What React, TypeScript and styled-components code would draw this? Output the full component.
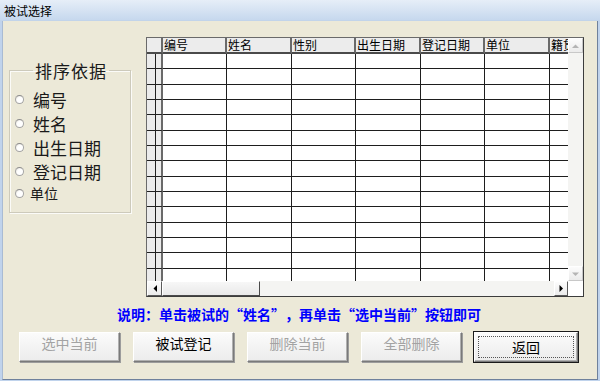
import React from 'react'
import styled, { createGlobalStyle } from 'styled-components'

const GlobalStyle = createGlobalStyle`
  html, body {
    margin: 0;
    padding: 0;
    background: #bcd0ea;
  }
  * {
    box-sizing: border-box;
  }
`

const CJK = `"Noto Sans CJK SC", "Noto Sans", sans-serif`

const columns = ['编号', '姓名', '性别', '出生日期', '登记日期', '单位', '籍贯']
const columnWidths = [64, 65, 64, 65, 64, 65, 64]
const ROWS = 15

const sortOptions = [
  { label: '编号', size: 17, height: 24, gap: 9 },
  { label: '姓名', size: 17, height: 24, gap: 9 },
  { label: '出生日期', size: 17, height: 24, gap: 9 },
  { label: '登记日期', size: 17, height: 24, gap: 9 },
  { label: '单位', size: 14, height: 20, gap: 6 },
]

const buttons = [
  { text: '选中当前', disabled: true },
  { text: '被试登记' },
  { text: '删除当前', disabled: true },
  { text: '全部删除', disabled: true },
  { text: '返回', isDefault: true },
]

type Dir = 'up' | 'down' | 'left' | 'right'

function Triangle ({ dir, color }: { dir: Dir, color: string }) {
  const pts = {
    up: '0,4 7,4 3.5,0.5',
    down: '0,0.5 7,0.5 3.5,4',
    left: '4,0 4,7 0.5,3.5',
    right: '0.5,0 0.5,7 4,3.5',
  }[dir]
  const vertical = dir === 'up' || dir === 'down'
  return (
    <svg width={vertical ? 7 : 4} height={vertical ? 4 : 7} viewBox={vertical ? '0 0 7 4' : '0 0 4 7'}>
      <polygon points={pts} fill={color} />
    </svg>
  )
}

export default function App () {
  return (
    <>
      <GlobalStyle />
      <Window>
        <TitleBar>被试选择</TitleBar>
        <Client>
          <TopRow>
            <SortGroup>
              <SortLegend>排序依据</SortLegend>
              {sortOptions.map(o => (
                <RadioRow key={o.label} $size={o.size} $height={o.height} $gap={o.gap}>
                  <RadioDot />
                  <span>{o.label}</span>
                </RadioRow>
              ))}
            </SortGroup>

            <GridFrame>
              <GridTable>
                <HeaderCell $span={2} />
                {columns.map(c => <HeaderCell key={c}>{c}</HeaderCell>)}
                {Array.from({ length: ROWS }).map((_, r) => (
                  <React.Fragment key={r}>
                    <SelectorCell />
                    <SelectorCell $thick />
                    {columnWidths.map((_, c) => <DataCell key={c} />)}
                  </React.Fragment>
                ))}
              </GridTable>

              <VScroll>
                <ArrowButton><Triangle dir="up" color="#b4b4b4" /></ArrowButton>
                <Track />
                <ArrowButton><Triangle dir="down" color="#b4b4b4" /></ArrowButton>
              </VScroll>

              <HScroll>
                <ArrowButton $dark><Triangle dir="left" color="#000" /></ArrowButton>
                <Thumb />
                <Track />
                <ArrowButton $dark $width={14}><Triangle dir="right" color="#000" /></ArrowButton>
              </HScroll>

              <Corner />
            </GridFrame>
          </TopRow>

          <Hint>
            说明：单击被试的<Quote $open>“</Quote>姓名<Quote>”</Quote>，再单击<Quote $open>“</Quote>选中当前<Quote>”</Quote>按钮即可
          </Hint>

          <ButtonRow>
            {buttons.map(b => (
              <WinButton key={b.text} disabled={b.disabled} $default={b.isDefault}>
                {b.isDefault ? <FocusRect>{b.text}</FocusRect> : b.text}
              </WinButton>
            ))}
          </ButtonRow>
        </Client>
      </Window>
    </>
  )
}

const Window = styled.div`
  width: 600px;
  height: 381px;
  display: flex;
  flex-direction: column;
  background: #c0d3ec;
  font-family: ${CJK};
  overflow: hidden;
`

const TitleBar = styled.div`
  height: 21px;
  flex: none;
  padding: 0 0 0 4px;
  display: flex;
  align-items: center;
  font-size: 12px;
  color: #000;
  background: linear-gradient(#e6eef8, #c6d8ee);
  border-bottom: 1px solid #c2d4ea;
`

const Client = styled.div`
  flex: 1;
  margin: 0 2px 1px 2px;
  background: #ece9d8;
  border-right: 1px solid #6f819c;
  border-bottom: 1px solid #6f819c;
  border-left: 1px solid #a9bbd3;
  padding: 16px 12px 0 6px;
  display: flex;
  flex-direction: column;
`

const TopRow = styled.div`
  display: flex;
  align-items: flex-start;
  gap: 15px;
`

const SortGroup = styled.fieldset`
  margin: 25px 0 0 0;
  width: 122px;
  height: 151px;
  padding: 8px 0 0 5px;
  border: 1px solid #cdcabb;
  box-shadow: inset 1px 1px 0 #fbfbf8, 1px 1px 0 #fbfbf8;
  flex: none;
`

const SortLegend = styled.legend`
  margin-left: 18px;
  padding: 0 2px;
  font-size: 17px;
  letter-spacing: 1px;
  line-height: 17px;
  height: 17px;
  color: #1a1a1a;
`

const RadioRow = styled.div<{ $size: number, $height: number, $gap: number }>`
  display: flex;
  align-items: center;
  height: ${({ $height }) => $height}px;
  gap: ${({ $gap }) => $gap}px;
  font-size: ${({ $size }) => $size}px;
  line-height: 1;
  color: #1a1a1a;
`

const RadioDot = styled.span`
  width: 9px;
  height: 9px;
  border-radius: 50%;
  flex: none;
  border: 1px solid #a4a4a4;
  border-top-color: #8c8c8c;
  background: radial-gradient(circle at 60% 60%, #ffffff 45%, #dedbd0 100%);
`

const GridFrame = styled.div`
  width: 438px;
  height: 260px;
  flex: none;
  display: grid;
  grid-template-columns: minmax(0, 1fr) 15px;
  grid-template-rows: minmax(0, 1fr) 15px;
  border: 1px solid #3c3c3c;
  border-top-color: #6a6a6a;
  border-left-color: #6a6a6a;
  background: #fff;
`

const GridTable = styled.div`
  display: grid;
  min-width: 0;
  min-height: 0;
  grid-template-columns: 9px 7px ${columnWidths.map(w => `${w}px`).join(' ')};
  grid-template-rows: 16px;
  grid-auto-rows: 15.33px;
  overflow-x: clip;
  overflow-y: visible;
  background: #fff;
`

const HeaderCell = styled.div<{ $span?: number }>`
  grid-column: span ${({ $span }) => $span ?? 1};
  background: #ececec;
  border-right: 2px solid #6a6a6a;
  border-bottom: 2px solid #4a4a4a;
  font-size: 12px;
  line-height: 14px;
  padding-left: 1px;
  color: #000;
  white-space: nowrap;
`

const SelectorCell = styled.div<{ $thick?: boolean }>`
  background: #ebebeb;
  border-right: ${({ $thick }) => ($thick ? '2px solid #6a6a6a' : '1px solid #202020')};
  border-bottom: 1px solid #202020;
`

const DataCell = styled.div`
  background: #fff;
  border-right: 1px solid #1e1e1e;
  border-bottom: 1px solid #1e1e1e;
`

const VScroll = styled.div`
  display: flex;
  flex-direction: column;
  min-height: 0;
  background: #f4f4f2;
`

const HScroll = styled.div`
  display: flex;
  min-width: 0;
  background: #f4f4f2;
`

const Track = styled.div`
  flex: 1;
  background: #f4f4f2;
`

const ArrowButton = styled.div<{ $dark?: boolean, $width?: number }>`
  width: ${({ $width }) => $width ?? 15}px;
  height: 15px;
  flex: none;
  display: flex;
  align-items: center;
  justify-content: center;
  background: linear-gradient(#fcfcfc, #ebebeb);
  border: 1px solid;
  border-color: #ffffff ${({ $dark }) => ($dark ? '#5a5a5a' : '#c8c8c8')} ${({ $dark }) => ($dark ? '#5a5a5a' : '#c8c8c8')} #ffffff;
`

const Thumb = styled.div`
  width: 98px;
  flex: none;
  background: linear-gradient(#f7f7f7, #e9e9e9);
  border: 1px solid;
  border-color: #ffffff #4a4a4a #4a4a4a #ffffff;
`

const Corner = styled.div`
  background: #fff;
`

const Hint = styled.div`
  margin-top: 8px;
  text-align: center;
  padding-left: 4px;
  font-size: 14px;
  line-height: 18px;
  font-weight: bold;
  color: #0000ff;
  white-space: nowrap;
`

const Quote = styled.span<{ $open?: boolean }>`
  display: inline-block;
  width: 1em;
  text-align: ${({ $open }) => ($open ? 'right' : 'left')};
`

const ButtonRow = styled.div`
  margin: 9px 0 0 10px;
  display: flex;
  gap: 13px;
  align-items: flex-start;
`

const WinButton = styled.button<{ $default?: boolean }>`
  width: ${({ $default }) => ($default ? 104 : 101)}px;
  height: 30px;
  margin-left: ${({ $default }) => ($default ? -1 : 0)}px;
  padding: 0;
  font-family: ${CJK};
  font-size: 14px;
  color: #000;
  background: linear-gradient(#fbfbfb, #ececec);
  border: 1px solid;
  border-color: #ffffff #7a7a7a #7a7a7a #ffffff;
  box-shadow: inset -1px -1px 0 #b0b0b0, 1px 1px 0 #9c9c9c;
  outline: ${({ $default }) => ($default ? '1px solid #1a1a1a' : 'none')};
  outline-offset: 0;
  display: flex;
  align-items: stretch;
  justify-content: center;

  &:disabled {
    color: #a3a3a3;
  }
`

const FocusRect = styled.span`
  flex: 1;
  margin: 3px;
  display: flex;
  align-items: center;
  justify-content: center;
  border: 1px dotted #555;
`
